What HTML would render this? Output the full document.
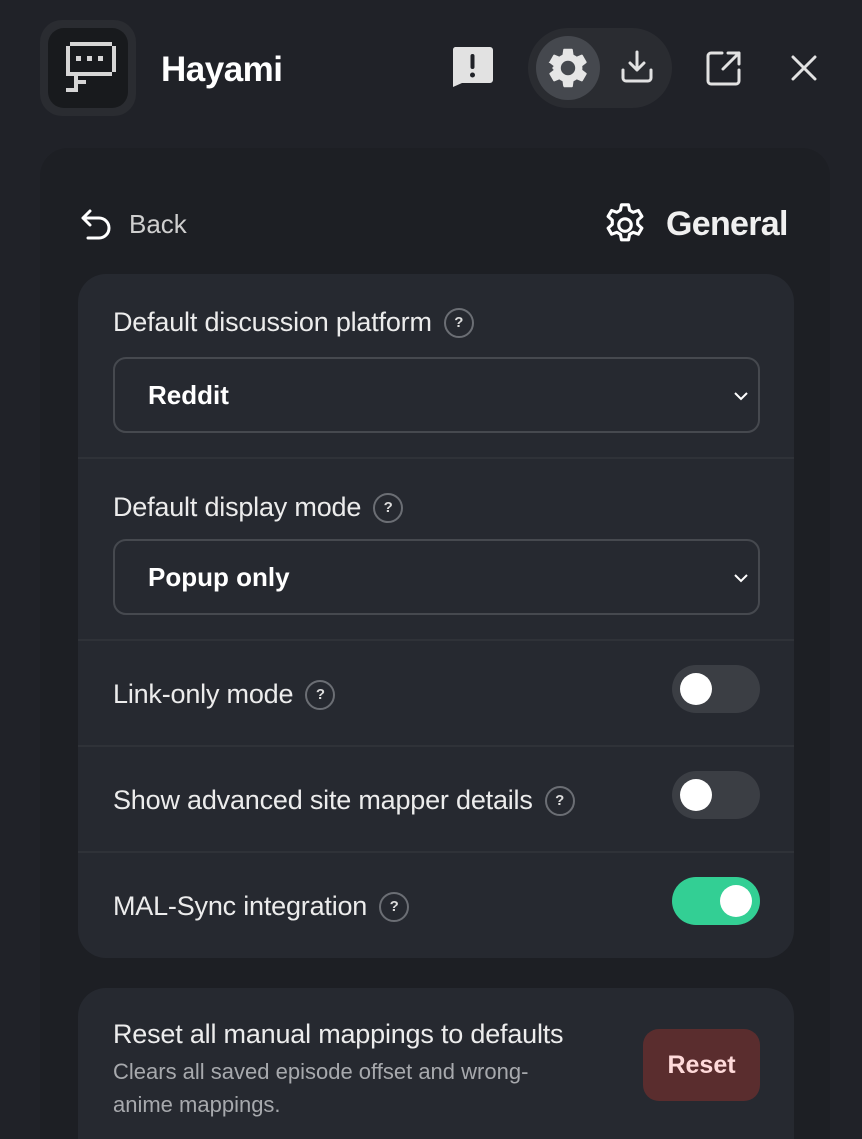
<!DOCTYPE html>
<html><head><meta charset="utf-8"><style>
*{box-sizing:border-box;margin:0;padding:0}
html,body{width:862px;height:1139px;overflow:hidden;background:#202228;font-family:"Liberation Sans",sans-serif;color:#e8e8e8}
#w{position:relative;width:862px;height:1139px;overflow:hidden}
.abs{position:absolute}
.logo{left:40px;top:20px;width:96px;height:96px;border-radius:22px;background:#2a2c31}
.logo .in{position:absolute;left:8px;top:8px;width:80px;height:80px;border-radius:16px;background:#181a1d}
.title{left:161px;top:50px;font-size:35px;font-weight:bold;color:#fff;letter-spacing:-0.5px}
.pill{left:528px;top:28px;width:144px;height:80px;border-radius:40px;background:#2a2c31}
.gc{left:536px;top:36px;width:64px;height:64px;border-radius:32px;background:#45484e}
.panel{left:40px;top:148px;width:790px;height:991px;border-radius:28px 28px 0 0;background:#1d1f24}
.card{left:78px;width:716px;border-radius:28px;background:#262930}
.row{position:absolute;left:0;width:716px;border-top:2px solid #2f3238}
.lbl{position:absolute;left:35px;font-size:27px;color:#ececec;white-space:nowrap;letter-spacing:-0.2px}
.q{display:inline-block;width:30px;height:30px;border:2px solid #6b6e74;border-radius:50%;font-size:15px;font-weight:bold;text-align:center;line-height:26px;vertical-align:4px;margin-left:12px;color:#ddd}
.sel{position:absolute;left:35px;width:647px;height:76px;border:2px solid #46494f;border-radius:13px;font-size:26px;font-weight:bold;color:#fff;padding-left:33px;line-height:72px}
.sel svg{position:absolute;right:8px;top:28px}
.tg{position:absolute;left:594px;width:88px;height:48px;border-radius:24px;background:#3b3e44}
.tg i{position:absolute;top:8px;left:8px;width:32px;height:32px;border-radius:50%;background:#fff}
.tg.on{background:#33cf94}.tg.on i{left:48px}
</style></head><body><div id="w">
<div class="abs logo"><div class="in">
<svg width="80" height="80" viewBox="0 0 80 80" style="position:absolute;left:0;top:0" fill="#d6d6d6">
<rect x="22" y="14" width="42" height="4"/><rect x="18" y="18" width="4" height="30"/><rect x="64" y="18" width="4" height="26"/><rect x="22" y="44" width="42" height="4"/>
<rect x="26" y="48" width="4" height="12"/><rect x="18" y="60" width="12" height="4"/><rect x="30" y="52" width="8" height="4"/>
<rect x="28" y="28" width="5" height="5"/><rect x="39" y="28" width="5" height="5"/><rect x="50" y="28" width="5" height="5"/>
</svg></div></div>
<div class="abs title">Hayami</div>
<svg class="abs" style="left:452px;top:47px" width="41" height="40" viewBox="0 0 41 40"><path d="M3 0h35a3 3 0 0 1 3 3v30a3 3 0 0 1-3 3H10L1 40V3a3 3 0 0 1 2-3z" fill="#e2e2e2"/><rect x="18.5" y="7" width="4" height="15" rx="2" fill="#202228"/><circle cx="20.5" cy="28" r="2.5" fill="#202228"/></svg>
<div class="abs pill"></div><div class="abs gc"></div>
<svg class="abs" style="left:544px;top:44px" width="48" height="48" viewBox="0 0 24 24"><path fill="#e6e6e6" d="M19.14 12.94c.04-.3.06-.61.06-.94s-.02-.64-.07-.94l2.03-1.58a.49.49 0 0 0 .12-.61l-1.92-3.32a.49.49 0 0 0-.59-.22l-2.39.96c-.5-.38-1.03-.7-1.62-.94l-.36-2.54a.48.48 0 0 0-.48-.41h-3.84c-.24 0-.43.17-.47.41l-.36 2.54c-.59.24-1.13.57-1.62.94l-2.39-.96a.49.49 0 0 0-.59.22L2.74 8.87c-.12.21-.8.47.12.61l2.03 1.58c-.5.3-.7.64-.7.94s.2.64.7.94l-2.03 1.58a.49.49 0 0 0-.12.61l1.92 3.32c.12.22.37.29.59.22l2.39-.96c.5.38 1.03.7 1.62.94l.36 2.54c.5.24.24.41.48.41h3.84c.24 0 .44-.17.47-.41l.36-2.54c.59-.24 1.13-.56 1.62-.94l2.39.96c.22.08.47 0 .59-.22l1.92-3.32c.12-.22.07-.47-.12-.61l-2.01-1.58zM12 15.6A3.6 3.6 0 1 1 12 8.4a3.6 3.6 0 0 1 0 7.2z"/></svg>
<svg class="abs" style="left:620px;top:50px" width="34" height="34" viewBox="0 0 34 34" fill="none" stroke="#e2e2e2" stroke-width="3" stroke-linecap="round" stroke-linejoin="round"><path d="M17 2v18M10 13l7 7 7-7M3 20v8a3 3 0 0 0 3 3h22a3 3 0 0 0 3-3v-8"/></svg>
<svg class="abs" style="left:706px;top:50px" width="36" height="36" viewBox="0 0 36 36" fill="none" stroke="#e2e2e2" stroke-width="3" stroke-linecap="round" stroke-linejoin="round"><path d="M16 3H5a3 3 0 0 0-3 3v25a3 3 0 0 0 3 3h25a3 3 0 0 0 3-3V20M22 3h11v11M33 3L17 19"/></svg>
<svg class="abs" style="left:791px;top:55px" width="26" height="26" viewBox="0 0 26 26" stroke="#e2e2e2" stroke-width="3" stroke-linecap="round"><path d="M2 2l22 22M24 2L2 24"/></svg>
<div class="abs panel"></div>
<svg class="abs" style="left:80px;top:208px" width="34" height="34" viewBox="0 0 34 34" fill="none" stroke="#fff" stroke-width="3" stroke-linecap="round" stroke-linejoin="round"><path d="M10 3L3 10l7 7M3 10h16a10 10 0 0 1 0 20H8"/></svg>
<div class="abs" style="left:129px;top:209px;font-size:26px;color:#cfcfcf">Back</div>
<svg class="abs" style="left:600px;top:200px" width="50" height="50" viewBox="0 0 24 24" fill="none" stroke="#fff" stroke-width="1.5" stroke-linejoin="round"><path d="M10.3 2.3h3.4l.5 2.6 1.7 1 2.5-.9 1.7 2.9-2 1.8v2l2 1.8-1.7 2.9-2.5-.9-1.7 1-.5 2.6h-3.4l-.5-2.6-1.7-1-2.5.9-1.7-2.9 2-1.8v-2l-2-1.8 1.7-2.9 2.5.9 1.7-1z"/><circle cx="12" cy="12" r="3"/></svg>
<div class="abs" style="left:666px;top:205px;font-size:34px;font-weight:bold;color:#f0f0f0;letter-spacing:-0.7px">General</div>
<div class="abs card" style="top:274px;height:684px">
 <div class="lbl" style="top:33px">Default discussion platform<span class="q">?</span></div>
 <div class="sel" style="top:83px">Reddit<svg width="18" height="18" viewBox="0 0 18 18" fill="none" stroke="#fff" stroke-width="2"><path d="M3 6l6 6 6-6"/></svg></div>
 <div class="row" style="top:183px;height:182px">
  <div class="lbl" style="top:33px">Default display mode<span class="q">?</span></div>
  <div class="sel" style="top:80px">Popup only<svg width="18" height="18" viewBox="0 0 18 18" fill="none" stroke="#fff" stroke-width="2"><path d="M3 6l6 6 6-6"/></svg></div>
 </div>
 <div class="row" style="top:365px;height:106px">
  <div class="lbl" style="top:38px">Link-only mode<span class="q">?</span></div>
  <div class="tg" style="top:24px"><i></i></div>
 </div>
 <div class="row" style="top:471px;height:106px">
  <div class="lbl" style="top:38px">Show advanced site mapper details<span class="q">?</span></div>
  <div class="tg" style="top:24px"><i></i></div>
 </div>
 <div class="row" style="top:577px;height:107px">
  <div class="lbl" style="top:38px">MAL-Sync integration<span class="q">?</span></div>
  <div class="tg on" style="top:24px"><i></i></div>
 </div>
</div>
<div class="abs card" style="top:988px;height:151px;border-radius:28px 28px 0 0">
 <div class="lbl" style="top:31px">Reset all manual mappings to defaults</div>
 <div class="abs" style="left:35px;top:67px;width:470px;font-size:22px;line-height:33px;color:#a7a9ad">Clears all saved episode offset and wrong-anime mappings.</div>
 <div class="abs" style="left:565px;top:41px;width:117px;height:72px;border-radius:16px;background:#5a2d2e;color:#ffdada;font-size:25px;font-weight:bold;text-align:center;line-height:72px">Reset</div>
</div>
</div></body></html>
